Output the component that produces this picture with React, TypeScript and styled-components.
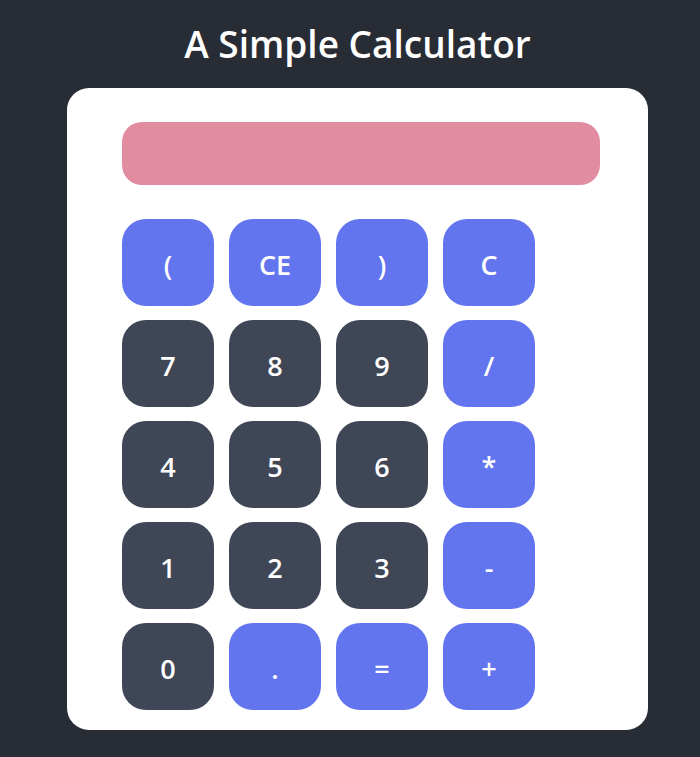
import styled, { createGlobalStyle } from "styled-components";

const GlobalStyle = createGlobalStyle`
  body {
    margin: 0;
    background: #282c35;
    font-family: "Open Sans", "Noto Sans", sans-serif;
  }
`;

const Page = styled.div`
  display: flex;
  flex-direction: column;
  align-items: center;
  padding-left: 15px;
  min-height: 757px;
`;

const Title = styled.h1`
  margin: 20px 0 20px;
  font-size: 37px;
  line-height: 48px;
  font-weight: 600;
  color: #ffffff;
`;

const Card = styled.div`
  width: 581px;
  box-sizing: border-box;
  padding: 34px 48px 20px 55px;
  background: #ffffff;
  border-radius: 22px;
`;

const Display = styled.div`
  height: 63px;
  background: #e28ca2;
  border-radius: 20px;
`;

const Keys = styled.div`
  display: grid;
  grid-template-columns: repeat(4, 92px);
  grid-auto-rows: 87px;
  column-gap: 15px;
  row-gap: 14px;
  margin-top: 34px;
`;

const Key = styled.button<{ $accent?: boolean }>`
  border: none;
  border-radius: 24px;
  background: ${({ $accent }) => ($accent ? "#6275ee" : "#3f4656")};
  color: #ffffff;
  font-family: inherit;
  font-size: 27px;
  font-weight: 600;
  padding: 4px 0 0;
  cursor: pointer;
`;

const keys: [string, boolean][] = [
  ["(", true],
  ["CE", true],
  [")", true],
  ["C", true],
  ["7", false],
  ["8", false],
  ["9", false],
  ["/", true],
  ["4", false],
  ["5", false],
  ["6", false],
  ["*", true],
  ["1", false],
  ["2", false],
  ["3", false],
  ["-", true],
  ["0", false],
  [".", true],
  ["=", true],
  ["+", true],
];

export default function App() {
  return (
    <Page>
      <GlobalStyle />
      <Title>A Simple Calculator</Title>
      <Card>
        <Display />
        <Keys>
          {keys.map(([label, accent]) => (
            <Key key={label} $accent={accent}>
              {label}
            </Key>
          ))}
        </Keys>
      </Card>
    </Page>
  );
}
